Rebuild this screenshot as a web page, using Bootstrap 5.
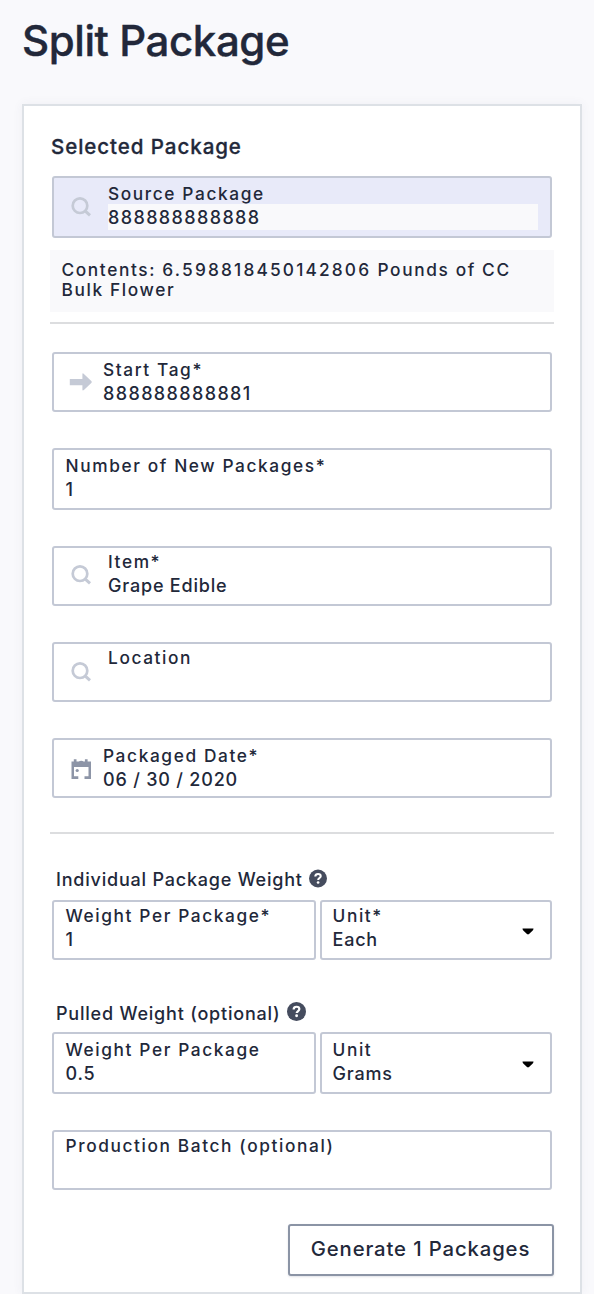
<!DOCTYPE html>
<html lang="en">
<head>
<meta charset="utf-8">
<meta name="viewport" content="width=device-width, initial-scale=1">
<title>Split Package</title>
<link href="https://cdn.jsdelivr.net/npm/bootstrap@5.3.0/dist/css/bootstrap.min.css" rel="stylesheet">
<style>
body{background:#f9f9fc;color:#22283a;font-family:Inter,"Liberation Sans",sans-serif;font-weight:500;height:1294px;overflow:hidden}
.page-title{font-size:42px;font-weight:500;-webkit-text-stroke:.4px #22283a;line-height:52px;letter-spacing:-.42px;padding:15px 0 0 22px;height:104px}
.panel{margin:0 12px 0 22px;height:1190px;border:2px solid #dde1e6;background:#fff;padding:0 26px;box-shadow:0 0 10px rgba(60,70,100,.06)}
.section-title{font-size:20.5px;font-weight:500;-webkit-text-stroke:.3px #22283a;line-height:26px;letter-spacing:.95px;padding:28px 0 0 1px;height:70px}
.field{height:60px;border:2px solid #c3c8d5;border-radius:3px;background:#fff;padding:4px 12px 0 11.5px;margin:0 2px;font-size:18px;line-height:24px}
.field.up{padding-top:2px}
.field.tall{height:62px}
.field.selected{background:#e8eaf9}
.field .ico{width:24px;flex:none;margin:0 0 0 3px}
.field.search .txt{margin-left:15.5px}
.field.tagged .txt{margin-left:10.5px}
.lbl{font-size:17.3px;letter-spacing:1.61px;height:24px}
.val{letter-spacing:.8px;height:24px}
.val.digits{letter-spacing:1.38px}
.selected .val{background:#f9f9fb;height:26px;margin-top:-2px;line-height:28px}
.contents{background:#f9f9fb;height:62px;margin-top:12px;padding:10px 11.5px;font-size:17.3px;line-height:20px;letter-spacing:1.62px}
.contents .qty{letter-spacing:2.17px}
.rule{height:2px;background:#dcdddf}
.group-label{font-size:18px;line-height:24px;letter-spacing:.79px;padding-left:6px}
.pair{margin:0 2px;gap:4px}
.pair .field{margin:0}
.w-qty{width:264px}.pair .w-unit{width:232px;padding-left:10.5px}
.caret{margin:24px 4px 0 0}
.btn-gen{width:266px;height:52px;border:2px solid #8b94a5;border-radius:3px;background:#fff;color:#22283a;font-size:20.3px;font-weight:500;letter-spacing:.88px;line-height:26px;padding:0 1px 2px 0;box-shadow:0 1px 2px rgba(60,70,100,.15)}
.g36{margin-top:36px}
svg{display:block}
</style>
</head>
<body>
<svg width="0" height="0" class="position-absolute">
<symbol id="search" viewBox="0 0 24 24"><circle cx="11" cy="10.700" r="7.3" fill="none" stroke="#c5cad6" stroke-width="2.7"/><path d="M15.500 15.300l5.500 5" stroke="#c5cad6" stroke-width="3"/></symbol>
<symbol id="help" viewBox="0 0 18 18"><circle cx="9" cy="9" r="9" fill="#454c5e"/><path d="M6.300 7.100C6.300 5.300 7.400 4.500 9 4.500s2.700.8 2.700 2.200c0 1.800-2.500 1.900-2.500 3.800" fill="none" stroke="#fff" stroke-width="2.1"/><circle cx="9.100" cy="13" r="1.350" fill="#fff"/></symbol>
</svg>
<h1 class="page-title m-0">Split Package</h1>
<main class="panel">
  <h2 class="section-title m-0">Selected Package</h2>
  <div class="field tall selected search d-flex">
    <svg class="ico" height="24" style="margin-top:13px"><use href="#search"/></svg>
    <div class="txt flex-grow-1"><div class="lbl">Source Package</div><div class="val digits">888888888888</div></div>
  </div>
  <div class="contents">
    <div class="text-nowrap"><span>Contents:</span> <span class="qty">6.598818450142806</span> <span>Pounds of CC</span></div>
    <div>Bulk Flower</div>
  </div>
  <div class="rule" style="margin-top:10px"></div>
  <div class="field tagged d-flex" style="margin-top:28px">
    <svg class="ico" height="24" viewBox="0 0 24 24" style="margin-top:12px"><path d="M.8 9h12.600V4.400q0-1.800 1.500-.5l7.400 7q1.100 1.100 0 2.200l-7.400 7q-1.500 1.200-1.500-.6v-4.300H.8z" fill="#c5cad6"/></svg>
    <div class="txt"><div class="lbl">Start Tag*</div><div class="val digits">888888888881</div></div>
  </div>
  <div class="field tall g36"><div class="lbl">Number of New Packages*</div><div class="val">1</div></div>
  <div class="field up search d-flex g36">
    <svg class="ico" height="24" style="margin-top:13px"><use href="#search"/></svg>
    <div class="txt"><div class="lbl">Item*</div><div class="val">Grape Edible</div></div>
  </div>
  <div class="field up search d-flex g36">
    <svg class="ico" height="24" style="margin-top:14px"><use href="#search"/></svg>
    <div class="txt"><div class="lbl">Location</div></div>
  </div>
  <div class="field tagged d-flex g36">
    <svg class="ico" height="24" viewBox="0 0 24 24" style="margin-top:13px"><g fill="#8d95a7"><path d="M2.500 4.500h2.300V2.300h2.700v2.200h2.200q2.500-1.500 5 0h1.200V2.300h2.700v2.200H22V10H2.500z"/><path d="M2.500 10H5v9.300h4.300V22H2.500zM19.500 10H22v12h-6.500v-2.700h4z"/><circle cx="8.200" cy="13.500" r="1.600"/></g></svg>
    <div class="txt"><div class="lbl">Packaged Date*</div><div class="val">06 / 30 / 2020</div></div>
  </div>
  <div class="rule" style="margin-top:34px"></div>
  <div class="group-label d-flex" style="margin-top:34px;height:32px">Individual Package Weight<svg width="18" height="19" style="margin:1px 0 0 6.500px"><use href="#help"/></svg></div>
  <div class="pair d-flex">
    <div class="field up w-qty"><div class="lbl">Weight Per Package*</div><div class="val">1</div></div>
    <div class="field up w-unit d-flex justify-content-between"><div><div class="lbl">Unit*</div><div class="val">Each</div></div><svg class="caret" width="12" height="7"><path d="M.5.5h11q0 1.500-1 2.200L7 6q-1 .8-2 0L1.500 2.700Q.5 2 .5.5z"/></svg></div>
  </div>
  <div class="group-label d-flex" style="margin-top:42px;height:30px">Pulled Weight (optional)<svg width="19" height="19" style="margin:0 0 0 7px"><use href="#help"/></svg></div>
  <div class="pair d-flex">
    <div class="field tall w-qty"><div class="lbl">Weight Per Package</div><div class="val">0.5</div></div>
    <div class="field tall w-unit d-flex justify-content-between"><div><div class="lbl">Unit</div><div class="val">Grams</div></div><svg class="caret" width="12" height="7" style="margin-top:23px"><path d="M.5.5h11q0 1.500-1 2.200L7 6q-1 .8-2 0L1.500 2.700Q.5 2 .5.5z"/></svg></div>
  </div>
  <div class="field up g36"><div class="lbl">Production Batch (optional)</div></div>
  <div class="d-flex justify-content-end" style="margin-top:34px"><button type="button" class="btn btn-gen">Generate 1 Packages</button></div>
</main>
<script src="https://cdn.jsdelivr.net/npm/bootstrap@5.3.0/dist/js/bootstrap.bundle.min.js"></script>
</body>
</html>
